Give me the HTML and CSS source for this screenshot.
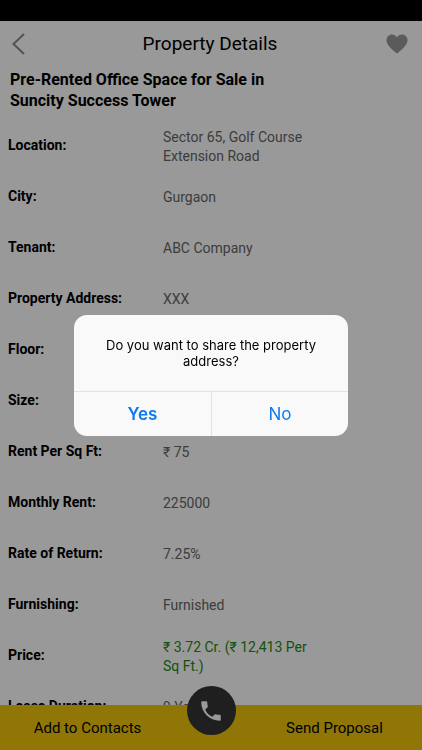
FILE: index.html
```html
<!DOCTYPE html>
<html lang="en">
<head>
<meta charset="utf-8">
<meta name="viewport" content="width=device-width, initial-scale=1">
<title>Property Details</title>
<link rel="stylesheet" href="styles.css">
</head>
<body>
<div class="app">
  <header class="topbar">
    <button class="icon-btn" aria-label="Back">
      <svg width="14" height="22" viewBox="0 0 14 22" fill="none" stroke="#908a85" stroke-width="2"><path d="M12 1 1.500 11 12 21"/></svg>
    </button>
    <h1 class="topbar-title">Property Details</h1>
    <button class="icon-btn favourite" aria-label="Favourite">
      <svg width="22" height="20" viewBox="0 0 22 20" fill="#989898"><path d="M11 19.500C7 16 .5 11.500.5 6.200.5 3 2.800.500 5.900.500 8 .5 10 1.600 11 3.400 12 1.600 14 .5 16.100.5c3.100 0 5.400 2.500 5.400 5.700 0 5.300-6.500 9.800-10.500 13.300z"/></svg>
    </button>
  </header>
  <main class="content">
    <h2 class="headline">Pre-Rented Office Space for Sale in Suncity Success Tower</h2>
    <dl class="details">
      <div class="row"><dt>Location:</dt><dd>Sector 65, Golf Course Extension Road</dd></div>
      <div class="row"><dt>City:</dt><dd>Gurgaon</dd></div>
      <div class="row"><dt>Tenant:</dt><dd>ABC Company</dd></div>
      <div class="row"><dt>Property Address:</dt><dd>XXX</dd></div>
      <div class="row"><dt>Floor:</dt><dd></dd></div>
      <div class="row"><dt>Size:</dt><dd></dd></div>
      <div class="row"><dt>Rent Per Sq Ft:</dt><dd>₹ 75</dd></div>
      <div class="row"><dt>Monthly Rent:</dt><dd>225000</dd></div>
      <div class="row"><dt>Rate of Return:</dt><dd>7.25%</dd></div>
      <div class="row"><dt>Furnishing:</dt><dd>Furnished</dd></div>
      <div class="row"><dt>Price:</dt><dd class="price">₹ 3.72 Cr. (₹ 12,413 Per Sq Ft.)</dd></div>
      <div class="row"><dt>Lease Duration:</dt><dd>9 Years</dd></div>
    </dl>
  </main>
  <footer class="actions">
    <button class="action">Add to Contacts</button>
    <button class="call" aria-label="Call">
      <svg width="26" height="26" viewBox="0 0 24 24" fill="#fff"><path d="M6.620 10.790c1.440 2.830 3.760 5.140 6.590 6.590l2.200-2.200c.27-.27.67-.36 1.020-.24 1.120.37 2.330.57 3.570.57.550 0 1 .45 1 1V20c0 .55-.45 1-1 1C10.610 21 3 13.390 3 4c0-.55.45-1 1-1h3.500c.55 0 1 .45 1 1 0 1.250.2 2.450.57 3.570.110.350.030.740-.25 1.020l-2.200 2.200z"/></svg>
    </button>
    <button class="action">Send Proposal</button>
  </footer>
</div>
<div class="overlay">
  <div class="dialog" role="alertdialog" aria-modal="true" aria-labelledby="question">
    <p class="question" id="question">Do you want to share the property address?</p>
    <div class="choices">
      <button class="choice primary">Yes</button>
      <button class="choice">No</button>
    </div>
  </div>
</div>
</body>
</html>
```
FILE: styles.css
```css
* {
  box-sizing: border-box;
  margin: 0;
}

body {
  background: #fff;
  color: #000;
  font-family: Roboto, "Noto Sans", sans-serif;
}

button {
  padding: 0;
  border: 0;
  background: none;
  color: inherit;
  font: inherit;
}

svg {
  display: block;
}

.app {
  display: flex;
  flex-direction: column;
  height: 100vh;
  border-top: 21px solid #000;
}

.topbar {
  display: grid;
  grid-template-columns: 1fr auto 1fr;
  align-items: center;
  height: 45px;
  padding: 0 14px 0 12px;
}

.topbar-title {
  font-size: 19px;
  font-weight: 400;
}

.icon-btn {
  justify-self: start;
}

.favourite {
  justify-self: end;
}

.content {
  flex: 1;
  min-height: 0;
  overflow: hidden;
}

.headline {
  max-width: 300px;
  padding: 3px 10px 10px;
  font-size: 16px;
  font-weight: 700;
  line-height: 21px;
}

.row {
  display: grid;
  grid-template-columns: 155px minmax(0, 150px);
  align-items: center;
  min-height: 51px;
  padding-left: 8px;
  font-size: 14px;
  line-height: 19px;
}

dt {
  padding-bottom: 2px;
  font-weight: 700;
}

dd {
  color: #666;
}

.price {
  color: #1f8a0c;
}

.actions {
  display: grid;
  grid-template-columns: 1fr 72px 1fr;
  height: 45px;
  background: #eec50d;
  font-size: 15px;
}

.call {
  display: grid;
  place-items: center;
  justify-self: center;
  width: 49px;
  height: 49px;
  margin-top: -19px;
  border-radius: 50%;
  background: #343434;
}

.overlay {
  position: fixed;
  inset: 0;
  display: grid;
  place-items: center;
  background: rgba(0, 0, 0, 0.4);
}

.dialog {
  width: 65%;
  overflow: hidden;
  border-radius: 13px;
  background: #f9f9f9;
  font-family: Inter, sans-serif;
}

.question {
  padding: 22px 24px;
  font-size: 13px;
  line-height: 16px;
  text-align: center;
}

.choices {
  display: grid;
  grid-template-columns: 1fr 1fr;
  border-top: 1px solid #e2e2e4;
}

.choice {
  height: 44px;
  color: #0f7af0;
  font-size: 17px;
}

.choice + .choice {
  border-left: 1px solid #e2e2e4;
}

.primary {
  font-weight: 600;
}
```
